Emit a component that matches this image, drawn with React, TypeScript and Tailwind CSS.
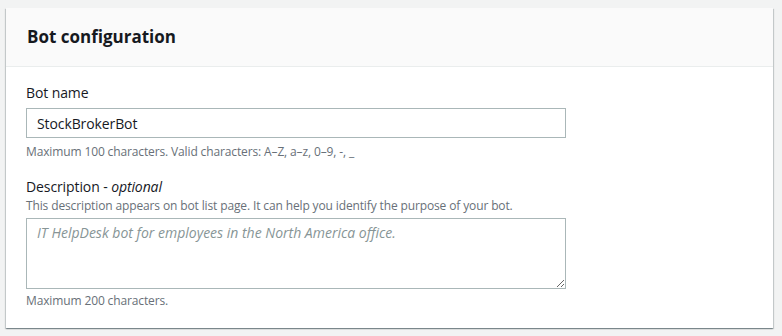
export default function App() {
  return (
    <div
      className="w-[782px] h-[336px] bg-[#f2f3f3] pt-[8px] pl-[6px]"
      style={{ fontFamily: '"Open Sans", "Noto Sans", sans-serif' }}
    >
      <div className="w-[767px] bg-white shadow-[0_1px_1px_0_rgba(0,28,36,0.3),1px_1px_1px_0_rgba(0,28,36,0.15),-1px_1px_1px_0_rgba(0,28,36,0.15)]">
        <div className="h-[59px] bg-[#fafafa] border-b border-[#eaeded] flex items-center px-[21px]">
          <h2 className="text-[17px] leading-[22px] font-bold text-[#16191f]">Bot configuration</h2>
        </div>
        <div className="pl-[20px] pt-[15px] pb-[19px]">
          <label className="block text-[14px] leading-[22px] text-[#16191f] tracking-[-0.1px]">Bot name</label>
          <div className="mt-[4px] w-[540px] h-[30px] border border-[#aab7b8] flex items-center px-[10px] text-[14px] text-[#16191f] tracking-[-0.1px]">
            StockBrokerBot
          </div>
          <p className="mt-[6px] text-[12px] leading-[16px] text-[#687078] tracking-[-0.13px]">
            Maximum 100 characters. Valid characters: A–Z, a–z, 0–9, -, _
          </p>
          <label className="block mt-[16px] text-[14px] leading-[22px] text-[#16191f] tracking-[-0.1px]">
            Description - <i>optional</i>
          </label>
          <p className="text-[12px] leading-[16px] text-[#687078] tracking-[-0.13px]">
            This description appears on bot list page. It can help you identify the purpose of your bot.
          </p>
          <textarea
            className="block mt-[4px] w-[540px] h-[71px] border border-[#aab7b8] px-[10px] pt-[3px] text-[14px] leading-[22px] text-[#16191f] placeholder:text-[#879596] placeholder:italic outline-none resize-y"
            placeholder="IT HelpDesk bot for employees in the North America office."
          />
          <p className="mt-[4px] text-[12px] leading-[16px] text-[#687078] tracking-[-0.13px]">Maximum 200 characters.</p>
        </div>
      </div>
    </div>
  );
}
